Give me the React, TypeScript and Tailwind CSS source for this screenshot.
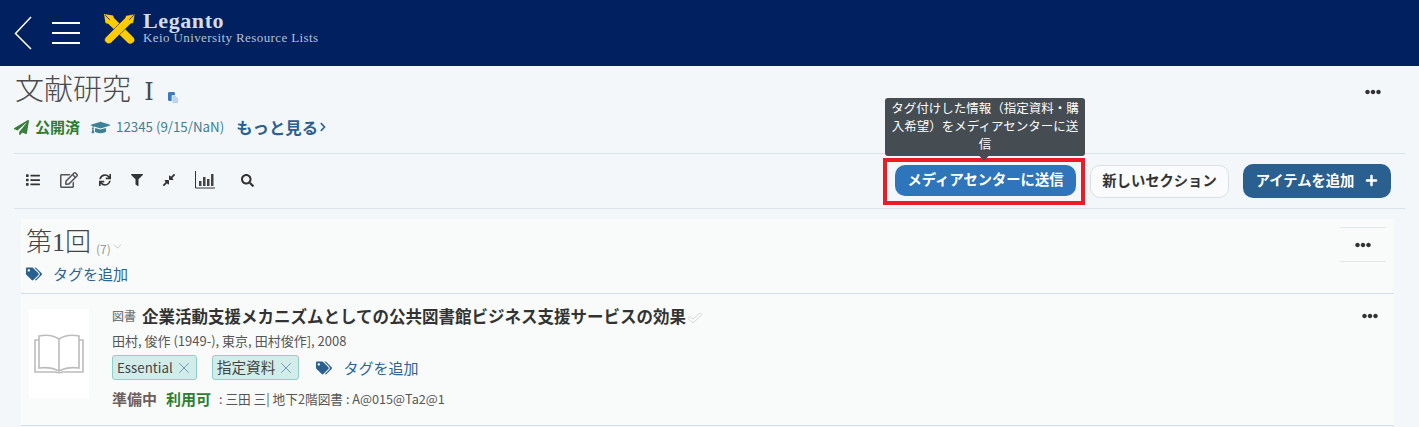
import { FaChevronRight, FaCompressAlt, FaEllipsisH, FaFilter, FaGraduationCap, FaList, FaPaperPlane, FaPlus, FaRegEdit, FaSearch, FaSync, FaTags } from 'react-icons/fa';
import { ChevronDown, X } from 'lucide-react';

function Logo() {
  return (
    <svg width="31" height="30" viewBox="0 0 31 30" className="shrink-0">
      <path d="M0 0l9 1.500 1 2.500 19 19c2 2 2 4 0 5.500-2 1.800-4 1.500-5.500 0L4.500 10 1.500 9z" fill="#ffcb05" />
      <path d="M31 0l-9 1.500-1 2.500L2 23c-2 2-2 4 0 5.500 2 1.800 4 1.500 5.500 0L26.500 10l3-1z" fill="#ffcb05" stroke="#00205f" strokeWidth="0.600" />
      <path d="M1 1l5 5M30 1l-5 5" stroke="#00205f" strokeWidth="0.800" />
    </svg>
  );
}

function CopyIcon() {
  return (
    <svg width="11" height="12" viewBox="0 0 11 12" className="mb-[7px] ml-[14px] shrink-0">
      <path d="M0 1.500C0 .7.600 0 1.400 0h4.200C6.400 0 7 .7 7 1.500V9H1.400C.6 9 0 8.300 0 7.500z" fill="#3a78c0" />
      <path d="M4 3.500h3.500L10.500 6.500V11.500H4z" fill="#bcd5ef" stroke="#f3f7f9" strokeWidth="0.700" />
    </svg>
  );
}

function ChartIcon() {
  return (
    <svg width="20" height="18" viewBox="0 0 20 18" className="ml-[19px]" fill="#444">
      <path d="M.5 0v17H20" fill="none" stroke="#333" strokeWidth="1" />
      <rect x="4" y="10" width="2.500" height="5" />
      <rect x="8" y="6" width="2.500" height="9" />
      <rect x="12" y="8" width="2.500" height="7" />
      <rect x="16" y="3" width="2.500" height="12" />
    </svg>
  );
}

function BookIcon() {
  return (
    <svg width="50" height="42" viewBox="0 0 50 42" fill="none" stroke="#bcbcbc" strokeWidth="1.600">
      <path d="M25 38C19 35 12 34 5 35V3c7-1.500 14-1 20 3 6-4 13-4.500 20-3v32c-7-1-14 0-20 3zM25 6v32" />
      <path d="M5 7H1v32h21c1 1 5 1 6 0h21V7h-4" />
    </svg>
  );
}

function OutlineCheck() {
  return (
    <svg width="16" height="12" viewBox="0 0 16 12" fill="none" stroke="#d8d8d8" strokeWidth="1" className="mt-[3px] ml-[1px]">
      <path d="M1 6.500l2-2 3 2.500 7-6 2 1.500L6 11z" />
    </svg>
  );
}

function AddTag() {
  return (
    <span className="flex items-center gap-[11px] text-[15px] leading-[20px] text-[#2a6496]">
      <FaTags className="text-[16px] text-[#2a6090]" />
      タグを追加
    </span>
  );
}

function Tag({ label, small }: { label: string; small?: boolean }) {
  return (
    <span className={`flex h-[25px] items-center gap-[2px] rounded-[3px] border border-[#8fcfc9] bg-[#d2ecea] pr-[3px] pl-[4px] text-[#444] ${small ? 'text-[13.300px]' : 'text-[14.700px]'}`}>
      {label}
      <X size={18} strokeWidth={0.800} className="text-[#2a6496]" />
    </span>
  );
}

export default function App() {
  return (
    <div className="h-[427px] overflow-hidden bg-[#f3f7f9] font-['Noto_Sans_CJK_JP',sans-serif]">
      <header className="flex h-[66px] items-center bg-[#00205f] pl-[14px]">
        <svg width="18" height="34" viewBox="0 0 18 34" fill="none" stroke="#fff" strokeWidth="1.500">
          <path d="M17 1L1.500 17.500 17 33" />
        </svg>
        <div className="ml-[20px] flex w-[28px] flex-col gap-[8px]">
          <div className="h-[2px] bg-white" />
          <div className="h-[2px] bg-white" />
          <div className="h-[2px] bg-white" />
        </div>
        <div className="mb-[8px] ml-[24px]"><Logo /></div>
        <div className="mb-[10px] ml-[8px] font-['Liberation_Serif',serif] text-[#d6dbe8]">
          <div className="text-[22px] leading-[20px] font-bold tracking-[0.600px]">Leganto</div>
          <div className="text-[13px] leading-[14px] tracking-[0.400px] text-[#b8c0d6]">Keio University Resource Lists</div>
        </div>
      </header>

      <div className="relative px-[14px]">
        <div className="flex h-[88px] justify-between border-b border-[#d9e5ea]">
          <div>
            <div className="flex items-end pt-[5px] pl-[1px]">
              <span className="font-['Liberation_Serif','Noto_Sans_CJK_JP',serif] text-[29px] leading-[38px] font-light text-[#4a4a4a]">
                文献研究 <span className="ml-[6px] font-['DejaVu_Serif',serif] text-[24px] font-normal">Ⅰ</span>
              </span>
              <CopyIcon />
            </div>
            <div className="mt-[6px] flex items-center">
              <FaPaperPlane className="text-[15px] text-[#3b7d3b]" />
              <span className="ml-[6px] text-[15px] leading-[20px] font-bold text-[#2e7d32]">公開済</span>
              <FaGraduationCap className="ml-[11px] text-[19px] text-[#3d8296]" />
              <span className="ml-[6px] text-[13.300px] text-[#3d7f95]">12345 (9/15/NaN)</span>
              <span className="ml-[12px] text-[16.400px] leading-[20px] font-bold text-[#2a6090]">もっと見る</span>
              <FaChevronRight className="text-[10px] text-[#2a6090]" />
            </div>
          </div>
          <FaEllipsisH className="mt-[18px] mr-[24px] text-[#333]" />
        </div>

        <div className="flex h-[55px] items-center justify-between border-b border-[#d9e5ea] pr-[14px] pl-[12px]">
          <div className="flex items-center pb-[2px] text-[14px] text-[#333]">
            <FaList className="text-[#333]" />
            <FaRegEdit className="ml-[20px] text-[18px] text-[#555]" />
            <FaSync className="ml-[21px] text-[12px]" />
            <FaFilter className="ml-[20px] text-[12px]" />
            <FaCompressAlt className="ml-[19px] text-[14px]" />
            <ChartIcon />
            <FaSearch className="ml-[26px] text-[13px]" />
          </div>
          <div className="flex items-center">
            <div className="relative border-4 border-[#ed1c24] pt-[3px] pr-[5px] pb-[5px] pl-[8px]">
              <button className="h-[31px] w-[181px] rounded-[10px] bg-[#2e75bb] pb-[2px] text-[14.300px] font-bold text-white">メディアセンターに送信</button>
              <div className="absolute top-[-64px] left-[-2px] w-[200px] rounded-[3px] bg-[#454c52] px-[6px] pt-[1px] pb-[3px] text-center text-[12.500px] leading-[18px] break-all text-white">
                タグ付けした情報（指定資料・購入希望）をメディアセンターに送信
                <div className="absolute bottom-[-3px] left-[95px] size-[8px] rotate-45 bg-[#454c52]" />
              </div>
            </div>
            <button className="ml-[5px] h-[33px] w-[139px] rounded-[10px] border border-[#dcdfe3] bg-[#fafbfc] pb-[2px] text-[14.300px] font-bold text-[#333]">新しいセクション</button>
            <button className="ml-[14px] flex h-[34px] w-[148px] items-center justify-center gap-[11px] rounded-[10px] bg-[#2a6090] pb-[2px] text-[14.300px] font-bold text-white">
              アイテムを追加
              <FaPlus className="text-[13px]" />
            </button>
          </div>
        </div>

        <section className="mt-[10px] mr-[11px] ml-[7px] bg-[#f9fbfb]">
          <div className="flex h-[75px] justify-between border-b border-[#cfe0ea] pl-[5px]">
            <div className="pt-[2px]">
              <div className="flex items-end">
                <span className="font-['Liberation_Serif','Noto_Sans_CJK_JP',serif] text-[26px] leading-[43px] font-light text-[#444]">第1回</span>
                <span className="mb-[8px] ml-[5px] text-[12px] leading-[14px] text-[#999]">(7)</span>
                <ChevronDown size={13} strokeWidth={1} className="mb-[11px] text-[#999]" />
              </div>
              <AddTag />
            </div>
            <div className="mt-[8px] mr-[8px] flex h-[35px] w-[46px] items-center justify-center border-y border-[#e2e8ea]">
              <FaEllipsisH className="text-[#333]" />
            </div>
          </div>

          <div className="flex h-[132px] border-b border-[#cfe0ea] pl-[8px]">
            <div className="mt-[15px] flex h-[89px] w-[60px] items-center justify-center bg-white">
              <BookIcon />
            </div>
            <div className="ml-[23px] flex-1 pt-[10px]">
              <div className="flex items-center">
                <span className="text-[12px] font-medium text-[#777]">図書</span>
                <span className="ml-[6px] text-[16.500px] leading-[24px] font-bold text-[#333]">企業活動支援メカニズムとしての公共図書館ビジネス支援サービスの効果</span>
                <OutlineCheck />
              </div>
              <div className="mt-[3px] text-[13px] leading-[20px] text-[#555]">田村, 俊作 (1949-), 東京, 田村俊作], 2008</div>
              <div className="mt-[4px] flex items-center">
                <Tag label="Essential" small />
                <span className="w-[15px]" />
                <Tag label="指定資料" />
                <span className="w-[17px]" />
                <AddTag />
              </div>
              <div className="mt-[9px] flex items-center text-[12.700px] text-[#555]">
                <span className="text-[15px] leading-[20px] font-bold text-[#6d5f5b]">準備中</span>
                <span className="ml-[9px] text-[15px] leading-[20px] font-bold text-[#2e7d32]">利用可</span>
                <span className="ml-[8px]">: 三田 三| 地下2階図書 : A@015@Ta2@1</span>
              </div>
            </div>
            <FaEllipsisH className="mt-[14px] mr-[16px] text-[#333]" />
          </div>
        </section>
      </div>
    </div>
  );
}
